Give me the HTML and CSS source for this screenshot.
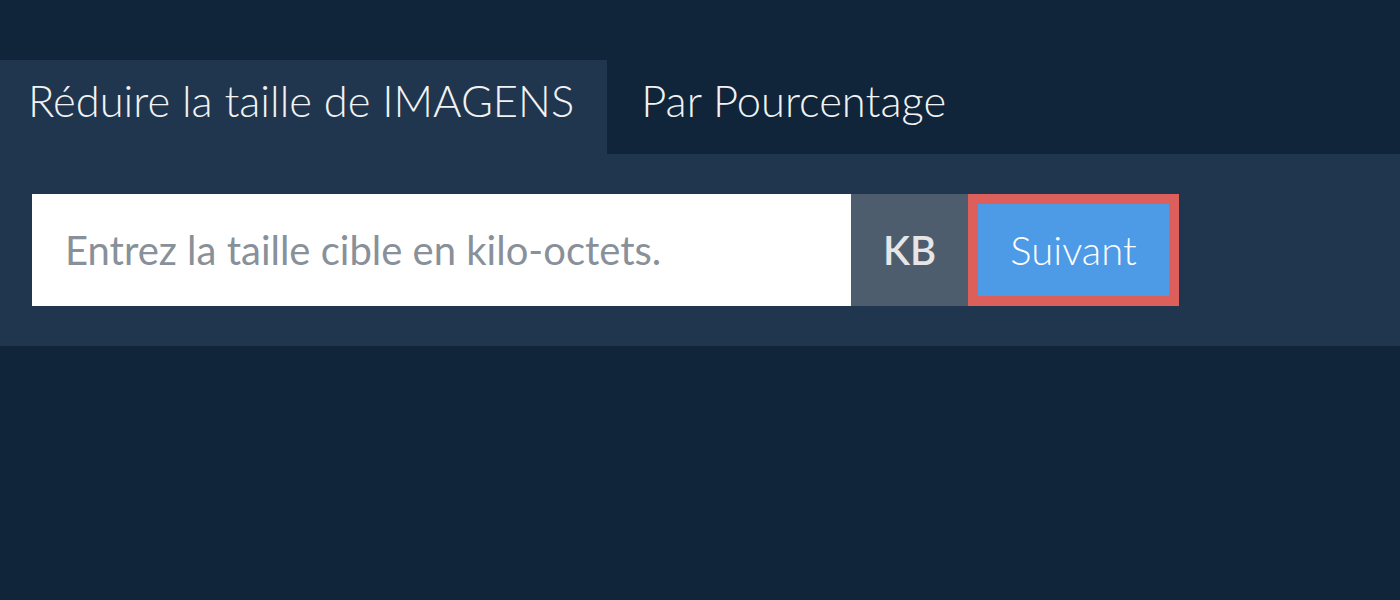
FILE: index.html
```html
<!DOCTYPE html>
<html lang="fr">
<head>
    <meta charset="UTF-8">
    <meta name="viewport" content="width=device-width, initial-scale=1.0">
    <title>Réduire la taille de IMAGENS</title>
    <link rel="stylesheet" href="styles.css">
</head>
<body>
    <div class="resizer">
        <nav class="tabs">
            <div class="tab active">Réduire la taille de IMAGENS</div>
            <div class="tab">Par Pourcentage</div>
        </nav>
        <section class="panel">
            <form class="size-form" onsubmit="return false;">
                <input class="size-input" type="text" placeholder="Entrez la taille cible en kilo-octets.">
                <span class="unit">KB</span>
                <button class="next-btn" type="submit">Suivant</button>
            </form>
        </section>
    </div>
</body>
</html>
```

FILE: styles.css
```css
/* Reset */
* {
    margin: 0;
    padding: 0;
    box-sizing: border-box;
}

body {
    background-color: #10243a;
    font-family: Lato, "Open Sans", sans-serif;
    color: #f2f2f2;
    height: 100vh;
}

.resizer {
    padding-top: 60px;
}

/* Tabs */
.tabs {
    display: flex;
}

.tab {
    height: 94px;
    padding: 0 33px 15px 28px;
    display: flex;
    align-items: center;
    font-size: 43.5px;
    font-weight: 300;
    color: #f2f2f2;
}

.tab.active {
    background-color: #20364e;
}

.tab + .tab {
    padding-left: 34px;
}

/* Panel */
.panel {
    background-color: #20364e;
    padding: 40px 32px;
}

.size-form {
    display: flex;
    height: 112px;
}

.size-input {
    width: 819px;
    border: none;
    outline: none;
    background: #ffffff;
    padding: 0 33px;
    font-family: inherit;
    font-size: 40px;
    color: #333;
}

.size-input::placeholder {
    color: #88909a;
}

.unit {
    width: 117px;
    background-color: #4d5d6d;
    color: #e6e6e6;
    font-size: 40px;
    font-weight: 600;
    display: flex;
    align-items: center;
    justify-content: center;
}

.next-btn {
    width: 211px;
    border: 10px solid #dc5f5c;
    background-color: #4d9ae6;
    color: #ffffff;
    font-family: inherit;
    font-size: 40px;
    font-weight: 300;
    cursor: pointer;
}
```
